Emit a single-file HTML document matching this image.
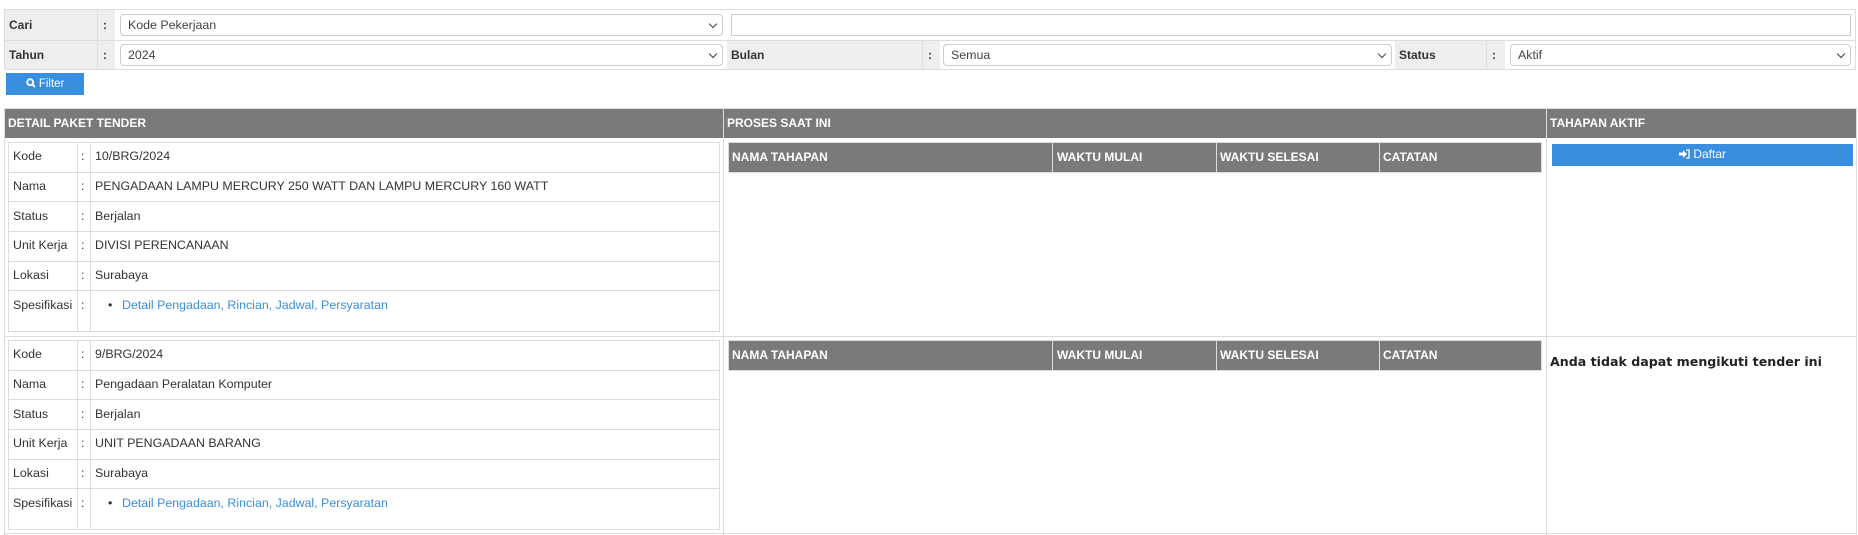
<!DOCTYPE html>
<html><head><meta charset="utf-8"><style>
*{box-sizing:border-box;margin:0;padding:0}
body{width:1858px;height:535px;background:#fff;font-family:"Liberation Sans",Arial,sans-serif;font-size:12.4px;color:#333;position:relative;overflow:hidden}
.a{position:absolute}
.lbl{background:#eee;font-weight:bold;color:#333;line-height:30px;padding-left:4px;font-size:12px}
.sel{border:1px solid #ccc;border-radius:4px;background:#fff;height:22px;line-height:20px;padding-left:7px;color:#444;font-size:12.4px}
.sel:after{content:"";position:absolute;right:6px;top:6px;width:5px;height:5px;border-right:1.5px solid #444;border-bottom:1.5px solid #444;transform:rotate(45deg)}
.hd{background:#7a7a7a;color:#fff;font-weight:bold;line-height:28px;padding-left:3px;font-size:12px}
.vl{background:#ddd;width:1px}
.hl{background:#ddd;height:1px}
a{color:#3a8ee0;text-decoration:none}
</style></head><body>
<div class="a" style="left:4px;top:9px;width:1852px;height:61px;border:1px solid #ddd"></div>
<div class="a hl" style="left:4px;top:40px;width:1852px"></div>
<div class="a lbl" style="left:5px;top:10px;width:92px;height:30px">Cari</div>
<div class="a lbl" style="left:97px;top:10px;width:18px;height:30px;border-left:1px solid #ddd;padding-left:5px">:</div>
<div class="a sel" style="left:120px;top:14px;width:603px">Kode Pekerjaan</div>
<div class="a" style="left:731px;top:14px;width:1120px;height:22px;border:1px solid #ccc"></div>
<div class="a lbl" style="left:5px;top:41px;width:92px;height:28px;line-height:28px">Tahun</div>
<div class="a lbl" style="left:97px;top:41px;width:18px;height:28px;line-height:28px;border-left:1px solid #ddd;padding-left:5px">:</div>
<div class="a sel" style="left:120px;top:44px;width:603px">2024</div>
<div class="a lbl" style="left:727px;top:41px;width:195px;height:28px;line-height:28px">Bulan</div>
<div class="a lbl" style="left:922px;top:41px;width:18px;height:28px;line-height:28px;border-left:1px solid #ddd;padding-left:5px">:</div>
<div class="a sel" style="left:943px;top:44px;width:449px">Semua</div>
<div class="a lbl" style="left:1395px;top:41px;width:91px;height:28px;line-height:28px">Status</div>
<div class="a lbl" style="left:1486px;top:41px;width:19px;height:28px;line-height:28px;border-left:1px solid #ddd;padding-left:5px">:</div>
<div class="a sel" style="left:1510px;top:44px;width:341px">Aktif</div>
<div class="a" style="left:6px;top:73px;width:78px;height:22px;background:#3a8ee0;color:#fff;line-height:22px;text-align:center;font-size:11.5px">
<svg width="10" height="10" viewBox="0 0 10 10" style="vertical-align:-1px"><circle cx="4.2" cy="4.2" r="3" fill="none" stroke="#fff" stroke-width="1.8"/><path d="M6.3 6.3L9 9" stroke="#fff" stroke-width="2"/></svg> Filter</div>
<div class="a" style="left:4px;top:108px;width:1853px;height:427px;border:1px solid #ddd;border-bottom:none"></div>
<div class="a hd" style="left:5px;top:109px;width:718px;height:29px">DETAIL PAKET TENDER</div>
<div class="a hd" style="left:724px;top:109px;width:822px;height:29px">PROSES SAAT INI</div>
<div class="a hd" style="left:1547px;top:109px;width:309px;height:29px">TAHAPAN AKTIF</div>
<div class="a vl" style="left:723px;top:108px;height:427px"></div>
<div class="a vl" style="left:1546px;top:108px;height:427px"></div>
<div class="a hl" style="left:4px;top:336px;width:1853px"></div>
<div class="a hl" style="left:4px;top:533px;width:1853px"></div>

<div class="a" style="left:8px;top:142px;width:712px;height:190px;border:1px solid #ddd"></div>
<div class="a vl" style="left:77px;top:142px;height:190px"></div>
<div class="a vl" style="left:90px;top:142px;height:190px"></div>
<div class="a hl" style="left:8px;top:172px;width:712px"></div>
<div class="a hl" style="left:8px;top:201px;width:712px"></div>
<div class="a hl" style="left:8px;top:231px;width:712px"></div>
<div class="a hl" style="left:8px;top:261px;width:712px"></div>
<div class="a hl" style="left:8px;top:290px;width:712px"></div>
<div class="a" style="left:13px;top:149px">Kode</div><div class="a" style="left:81px;top:149px">:</div><div class="a" style="left:95px;top:149px">10/BRG/2024</div>
<div class="a" style="left:13px;top:179px">Nama</div><div class="a" style="left:81px;top:179px">:</div><div class="a" style="left:95px;top:179px">PENGADAAN LAMPU MERCURY 250 WATT DAN LAMPU MERCURY 160 WATT</div>
<div class="a" style="left:13px;top:209px">Status</div><div class="a" style="left:81px;top:209px">:</div><div class="a" style="left:95px;top:209px">Berjalan</div>
<div class="a" style="left:13px;top:238px">Unit Kerja</div><div class="a" style="left:81px;top:238px">:</div><div class="a" style="left:95px;top:238px">DIVISI PERENCANAAN</div>
<div class="a" style="left:13px;top:268px">Lokasi</div><div class="a" style="left:81px;top:268px">:</div><div class="a" style="left:95px;top:268px">Surabaya</div>
<div class="a" style="left:13px;top:298px">Spesifikasi</div><div class="a" style="left:81px;top:298px">:</div><div class="a" style="left:108px;top:298px">&bull;</div><div class="a" style="left:122px;top:298px"><a>Detail Pengadaan, Rincian, Jadwal, Persyaratan</a></div>

<div class="a" style="left:8px;top:340px;width:712px;height:190px;border:1px solid #ddd"></div>
<div class="a vl" style="left:77px;top:340px;height:190px"></div>
<div class="a vl" style="left:90px;top:340px;height:190px"></div>
<div class="a hl" style="left:8px;top:370px;width:712px"></div>
<div class="a hl" style="left:8px;top:399px;width:712px"></div>
<div class="a hl" style="left:8px;top:429px;width:712px"></div>
<div class="a hl" style="left:8px;top:459px;width:712px"></div>
<div class="a hl" style="left:8px;top:488px;width:712px"></div>
<div class="a" style="left:13px;top:347px">Kode</div><div class="a" style="left:81px;top:347px">:</div><div class="a" style="left:95px;top:347px">9/BRG/2024</div>
<div class="a" style="left:13px;top:377px">Nama</div><div class="a" style="left:81px;top:377px">:</div><div class="a" style="left:95px;top:377px">Pengadaan Peralatan Komputer</div>
<div class="a" style="left:13px;top:407px">Status</div><div class="a" style="left:81px;top:407px">:</div><div class="a" style="left:95px;top:407px">Berjalan</div>
<div class="a" style="left:13px;top:436px">Unit Kerja</div><div class="a" style="left:81px;top:436px">:</div><div class="a" style="left:95px;top:436px">UNIT PENGADAAN BARANG</div>
<div class="a" style="left:13px;top:466px">Lokasi</div><div class="a" style="left:81px;top:466px">:</div><div class="a" style="left:95px;top:466px">Surabaya</div>
<div class="a" style="left:13px;top:496px">Spesifikasi</div><div class="a" style="left:81px;top:496px">:</div><div class="a" style="left:108px;top:496px">&bull;</div><div class="a" style="left:122px;top:496px"><a>Detail Pengadaan, Rincian, Jadwal, Persyaratan</a></div>

<div class="a" style="left:728px;top:142px;width:814px;height:31px;border:1px solid #ddd;background:#7a7a7a"></div>
<div class="a hd" style="left:729px;top:143px;width:324px;height:29px;line-height:29px;border-right:1px solid #ddd">NAMA TAHAPAN</div>
<div class="a hd" style="left:1054px;top:143px;width:163px;height:29px;line-height:29px;border-right:1px solid #ddd">WAKTU MULAI</div>
<div class="a hd" style="left:1217px;top:143px;width:163px;height:29px;line-height:29px;border-right:1px solid #ddd">WAKTU SELESAI</div>
<div class="a hd" style="left:1380px;top:143px;width:161px;height:29px;line-height:29px">CATATAN</div>

<div class="a" style="left:728px;top:340px;width:814px;height:31px;border:1px solid #ddd;background:#7a7a7a"></div>
<div class="a hd" style="left:729px;top:341px;width:324px;height:29px;line-height:29px;border-right:1px solid #ddd">NAMA TAHAPAN</div>
<div class="a hd" style="left:1054px;top:341px;width:163px;height:29px;line-height:29px;border-right:1px solid #ddd">WAKTU MULAI</div>
<div class="a hd" style="left:1217px;top:341px;width:163px;height:29px;line-height:29px;border-right:1px solid #ddd">WAKTU SELESAI</div>
<div class="a hd" style="left:1380px;top:341px;width:161px;height:29px;line-height:29px">CATATAN</div>

<div class="a" style="left:1552px;top:144px;width:301px;height:22px;background:#3a8ee0;color:#fff;line-height:21px;text-align:center;font-size:12px">
<svg width="11" height="10" viewBox="0 0 11 10" style="vertical-align:-1px"><path d="M0 3.5h4V1l4 4-4 4V6.5H0z" fill="#fff"/><path d="M7 1h3v8H7" fill="none" stroke="#fff" stroke-width="1.3"/></svg> Daftar</div>
<div class="a" style="left:1550px;top:354px;font-family:'DejaVu Sans',sans-serif;font-weight:bold;font-size:12.6px;color:#222">Anda tidak dapat mengikuti tender ini</div>
</body></html>
